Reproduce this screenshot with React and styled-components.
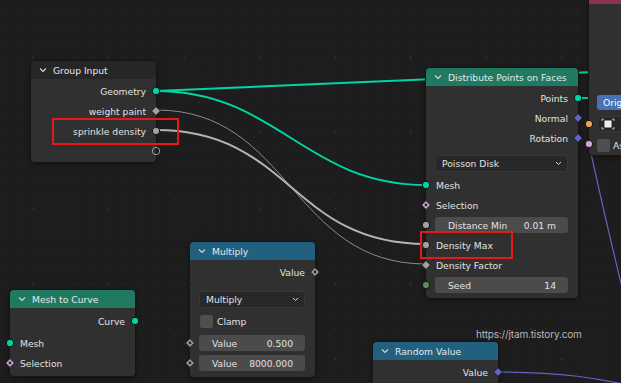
import styled, { createGlobalStyle } from "styled-components";

const GlobalStyle = createGlobalStyle`
  body {
    margin: 0;
    background: #1d1d1d;
    font-family: "DejaVu Sans", "Noto Sans", sans-serif;
  }
`;

const Canvas = styled.div`
  position: relative;
  width: 621px;
  height: 383px;
  overflow: hidden;
  background-color: #1d1d1d;
  background-image:
    radial-gradient(circle, #2b2b2b 1.2px, transparent 1.6px),
    radial-gradient(circle, #252525 1px, transparent 1.4px);
  background-size: 75.5px 75.5px, 15.1px 15.1px;
  background-position: -4.5px 19.5px, 10.5px 4.5px;
`;

const Links = styled.svg`
  position: absolute;
  left: 0;
  top: 0;
  width: 621px;
  height: 383px;
`;

const Node = styled.div`
  position: absolute;
  left: ${(p) => p.$x}px;
  top: ${(p) => p.$y}px;
  width: ${(p) => p.$w}px;
  background: #303030;
  border-radius: 4px;
  box-shadow: 0 0 0 1px #151515, 0 2px 6px rgba(0, 0, 0, 0.45);
  color: #e2e2e2;
  font-size: 9.2px;
  padding-bottom: ${(p) => p.$pb || 3}px;
`;

const Header = styled.div`
  height: 18px;
  display: flex;
  align-items: center;
  gap: 6px;
  padding-left: 8px;
  background: ${(p) => p.$color};
  border-radius: 4px 4px 0 0;
  color: #e8e8e8;
  margin-bottom: ${(p) => p.$mb || 2}px;
  white-space: nowrap;
`;

const Row = styled.div`
  position: relative;
  height: 20px;
  display: flex;
  align-items: center;
  justify-content: ${(p) => (p.$out ? "flex-end" : "flex-start")};
  padding: 0 10px;
  white-space: nowrap;
`;

const Spacer = styled.div`
  height: ${(p) => p.$h}px;
`;

const SocketWrap = styled.span`
  position: absolute;
  top: 50%;
  ${(p) => (p.$out ? "right: -5px;" : "left: -5px;")}
  width: 10px;
  height: 10px;
  margin-top: -5px;
  display: block;
`;

const FieldRow = styled.div`
  position: relative;
  box-sizing: border-box;
  height: ${(p) => p.$h || 20}px;
  padding: ${(p) => p.$pt || 0}px 10px 0 9px;
  display: flex;
  align-items: center;
`;

const Field = styled.div`
  flex: 1;
  height: 16px;
  background: #4b4b4b;
  border-radius: 3px;
  display: flex;
  align-items: center;
  justify-content: space-between;
  padding: 0 12px 0 13px;
  color: #e2e2e2;
  white-space: nowrap;
`;

const Dropdown = styled.div`
  flex: 1;
  height: 17px;
  box-sizing: border-box;
  background: #282828;
  border: 1px solid #383838;
  border-radius: 3px;
  display: flex;
  align-items: center;
  justify-content: space-between;
  padding: 0 5px 0 6px;
  color: #e2e2e2;
`;

const CheckRow = styled.div`
  height: 22px;
  display: flex;
  align-items: center;
  gap: 4px;
  padding-left: 10px;
  padding-bottom: 2px;
  box-sizing: border-box;
`;

const Check = styled.span`
  width: 13px;
  height: 13px;
  border-radius: 2px;
  background: #4f4f4f;
`;

const Box = styled.div`
  position: absolute;
  left: ${(p) => p.$x}px;
  top: ${(p) => p.$y}px;
  width: ${(p) => p.$w}px;
  height: ${(p) => p.$h}px;
  box-sizing: border-box;
  border: 2px solid #e3191c;
`;

const Watermark = styled.div`
  position: absolute;
  left: 476px;
  top: 328px;
  font-family: Inter, "Noto Sans", sans-serif;
  font-size: 10px;
  color: #b9b9b9;
  letter-spacing: -0.15px;
`;

const SideNode = styled.div`
  position: absolute;
  left: 589px;
  top: 0;
  width: 60px;
  height: 155px;
  background: #303030;
  border-top: 4px solid #8a3355;
  box-sizing: border-box;
  box-shadow: 0 0 0 1px #151515, 0 2px 6px rgba(0, 0, 0, 0.45);
  border-radius: 0 0 0 4px;
  padding: 91px 0 0 8px;
  display: flex;
  flex-direction: column;
  gap: 6px;
  font-size: 9.2px;
  color: #e2e2e2;
`;

const BlueButton = styled.div`
  height: 15px;
  background: #4772b3;
  border-radius: 3px 0 0 3px;
  padding-left: 6px;
  display: flex;
  align-items: center;
  color: #fff;
`;

const IconButton = styled.div`
  height: 16px;
  width: 40px;
  background: #282828;
  border: 1px solid #383838;
  border-right: none;
  border-radius: 3px 0 0 3px;
  box-sizing: border-box;
  display: flex;
  align-items: center;
  padding-left: 3px;
`;

const SideCheck = styled.div`
  display: flex;
  align-items: center;
  gap: 3px;
  height: 14px;
`;

const SideSocket = styled.span`
  position: absolute;
  left: -5px;
  top: ${(p) => p.$y}px;
  width: 10px;
  height: 10px;
`;

const COLORS = {
  geo: "#00d6a3",
  float: "#a1a1a1",
  int: "#598c5c",
  bool: "#cca6d6",
  vec: "#6363c7",
  orange: "#ed9e5c",
};

const Socket = ({ kind = "circle", color, hollow }) => (
  <svg width="10" height="10" viewBox="0 0 10 10" style={{ display: "block" }}>
    {kind === "circle" && (
      <circle
        cx="5"
        cy="5"
        r="3.7"
        fill={hollow ? "none" : color}
        stroke={hollow ? "#9a9a9a" : "#111"}
        strokeWidth="1"
      />
    )}
    {kind === "diamond" && (
      <path d="M5 0.6 L9.4 5 L5 9.4 L0.6 5 Z" fill={color} stroke="#111" strokeWidth="0.8" />
    )}
    {kind === "dotdiamond" && (
      <>
        <path d="M5 0.6 L9.4 5 L5 9.4 L0.6 5 Z" fill={color} stroke="#111" strokeWidth="0.8" />
        <circle cx="5" cy="5" r="1.4" fill="#222" />
      </>
    )}
  </svg>
);

const Chevron = () => (
  <svg width="8" height="6" viewBox="0 0 8 6">
    <polyline points="1,1.5 4,4.5 7,1.5" fill="none" stroke="#d8d8d8" strokeWidth="1.1" />
  </svg>
);

const SmallChevron = () => (
  <svg width="7" height="5" viewBox="0 0 7 5">
    <polyline points="1,1 3.5,3.5 6,1" fill="none" stroke="#d8d8d8" strokeWidth="1" />
  </svg>
);

const In = ({ label, kind, color, hollow }) => (
  <Row>
    <SocketWrap>
      <Socket kind={kind} color={color} hollow={hollow} />
    </SocketWrap>
    {label}
  </Row>
);

const Out = ({ label, kind, color, hollow }) => (
  <Row $out>
    {label}
    <SocketWrap $out>
      <Socket kind={kind} color={color} hollow={hollow} />
    </SocketWrap>
  </Row>
);

const ValueField = ({ label, value, kind, color }) => (
  <FieldRow>
    <SocketWrap>
      <Socket kind={kind} color={color} />
    </SocketWrap>
    <Field>
      <span>{label}</span>
      <span>{value}</span>
    </Field>
  </FieldRow>
);

const bez = (x1, y1, x2, y2, k = 0.45) => {
  const d = (x2 - x1) * k;
  return `M${x1} ${y1} C${x1 + d} ${y1}, ${x2 - d} ${y2}, ${x2} ${y2}`;
};

const App = () => {
  return (
    <>
      <GlobalStyle />
      <Canvas>
        <Links viewBox="0 0 621 383">
          <path d="M156 91 C220 89, 420 80, 640 70" stroke={COLORS.geo} strokeWidth="2" fill="none" />
          <path d={bez(156, 91, 426, 185)} stroke={COLORS.geo} strokeWidth="2" fill="none" />
          <path d={bez(156, 110, 426, 264, 0.5)} stroke="#8c8c8c" strokeWidth="1" fill="none" />
          <path d={bez(156, 130, 426, 244, 0.5)} stroke="#b4b4b4" strokeWidth="2" fill="none" />
          <path d="M578 98 L589 98" stroke={COLORS.geo} strokeWidth="2" />
          <path d="M588 140 C596 175, 604 215, 624 295" stroke={COLORS.vec} strokeWidth="1.2" fill="none" />
          <path d="M497 372 C560 372, 600 378, 640 388" stroke={COLORS.vec} strokeWidth="1.2" fill="none" />
        </Links>

        <Node $x={31} $y={61} $w={125} $pb={1}>
          <Header $color="#262626">
            <Chevron />
            Group Input
          </Header>
          <Out label="Geometry" color={COLORS.geo} />
          <Out label="weight paint" kind="diamond" color={COLORS.float} />
          <Out label="sprinkle density" color={COLORS.float} />
          <Out label="" hollow />
        </Node>

        <Node $x={426} $y={68} $w={152} $pb={3}>
          <Header $color="#1f7a61">
            <Chevron />
            Distribute Points on Faces
          </Header>
          <Out label="Points" color={COLORS.geo} />
          <Out label="Normal" kind="diamond" color={COLORS.vec} />
          <Out label="Rotation" kind="diamond" color={COLORS.vec} />
          <FieldRow $h={27} $pt={4}>
            <Dropdown>
              Poisson Disk
              <SmallChevron />
            </Dropdown>
          </FieldRow>
          <In label="Mesh" color={COLORS.geo} />
          <In label="Selection" kind="dotdiamond" color={COLORS.bool} />
          <ValueField label="Distance Min" value="0.01 m" color={COLORS.float} />
          <In label="Density Max" color={COLORS.float} />
          <In label="Density Factor" kind="diamond" color={COLORS.float} />
          <ValueField label="Seed" value="14" color={COLORS.int} />
        </Node>

        <Node $x={190} $y={242} $w={125} $pb={4}>
          <Header $color="#22607f">
            <Chevron />
            Multiply
          </Header>
          <Out label="Value" kind="dotdiamond" color={COLORS.float} />
          <FieldRow $h={29} $pt={6}>
            <Dropdown>
              Multiply
              <SmallChevron />
            </Dropdown>
          </FieldRow>
          <CheckRow>
            <Check />
            Clamp
          </CheckRow>
          <ValueField label="Value" value="0.500" kind="dotdiamond" color={COLORS.float} />
          <ValueField label="Value" value="8000.000" kind="dotdiamond" color={COLORS.float} />
        </Node>

        <Node $x={10} $y={290} $w={125} $pb={3}>
          <Header $color="#1f7a61" $mb={3}>
            <Chevron />
            Mesh to Curve
          </Header>
          <Out label="Curve" color={COLORS.geo} />
          <Spacer $h={2} />
          <In label="Mesh" color={COLORS.geo} />
          <In label="Selection" kind="dotdiamond" color={COLORS.bool} />
        </Node>

        <Node $x={373} $y={342} $w={125} $pb={20}>
          <Header $color="#22607f">
            <Chevron />
            Random Value
          </Header>
          <Out label="Value" kind="diamond" color={COLORS.vec} />
        </Node>

        <SideNode>
          <SideSocket $y={115}>
            <Socket color={COLORS.orange} />
          </SideSocket>
          <SideSocket $y={135}>
            <Socket color={COLORS.bool} />
          </SideSocket>
          <BlueButton>Orig</BlueButton>
          <IconButton>
            <svg width="14" height="12" viewBox="0 0 14 12">
              <path d="M1 3 V1 H3 M11 1 H13 V3 M13 9 V11 H11 M3 11 H1 V9" stroke="#bbb" strokeWidth="1" fill="none" />
              <rect x="3.5" y="2.5" width="7" height="7" fill="#eee" />
            </svg>
          </IconButton>
          <SideCheck>
            <Check />
            As
          </SideCheck>
        </SideNode>

        <Box $x={52} $y={118} $w={127} $h={27} />
        <Box $x={420} $y={231} $w={93} $h={28} />
        <Watermark>https://jtam.tistory.com</Watermark>
      </Canvas>
    </>
  );
};

export default App;
